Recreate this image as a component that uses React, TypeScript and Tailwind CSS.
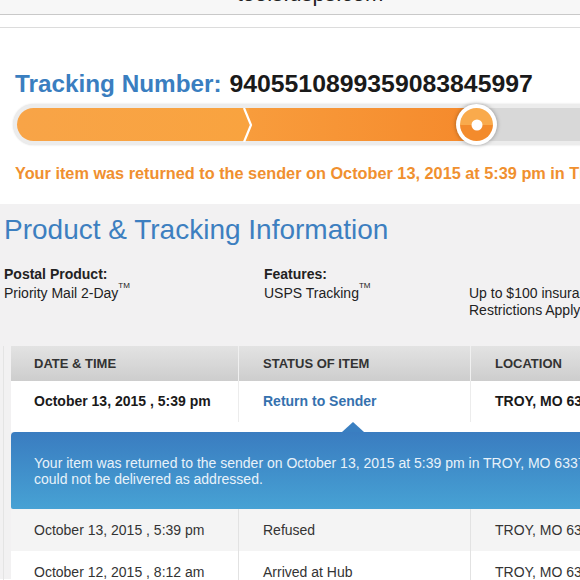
import React from "react";

const font = { fontFamily: '"Liberation Sans", Arial, sans-serif' };

function Row({ date, status, loc, bg }: { date: string; status: string; loc: string; bg: string }) {
  return (
    <div className={`flex h-[42px] items-center text-[14px] text-[#333] ${bg}`}>
      <div className="w-[228px] shrink-0 h-full flex items-center pl-[23px] border-r border-[#e2e2e2]">{date}</div>
      <div className="w-[232px] shrink-0 h-full flex items-center pl-[24px] border-r border-[#e2e2e2]">{status}</div>
      <div className="flex-1 h-full flex items-center pl-[24px] whitespace-nowrap">{loc}</div>
    </div>
  );
}

export default function App() {
  return (
    <div className="w-[580px] h-[580px] overflow-hidden bg-white" style={font}>
      {/* browser url bar */}
      <div className="h-[15px] bg-[#f7f7f7] border-b border-[#c9c9c9] overflow-hidden flex justify-center">
        <div className="text-[22px] leading-[22px] -mt-[17px] text-[#222] pl-[40px]">tools.usps.com</div>
      </div>
      <div className="h-[13px] bg-white border-b border-[#dcdcdc]" />

      {/* tracking header */}
      <div className="pt-[42px] pl-[15px] h-[176px] overflow-hidden whitespace-nowrap">
        <div className="text-[24.5px] leading-[28px] font-bold">
          <span className="text-[#3a7ec0] text-[24.3px]">Tracking Number:</span>{" "}
          <span className="text-[#1a1a1a] ml-[1px] text-[24.8px]">9405510899359083845997</span>
        </div>
        {/* progress bar */}
        <div className="relative mt-[6px] -ml-[2px] h-[41px] rounded-l-full bg-[#ececec] p-[4px] pr-0 w-[600px] shadow-[0_0_2px_rgba(0,0,0,0.15)]">
          <div className="flex h-full">
            <div className="w-[232px] shrink-0 h-full rounded-l-full bg-gradient-to-r from-[#f8a447] to-[#f9a33f]" />
            <div className="w-[232px] shrink-0 h-full bg-gradient-to-r from-[#f89c3c] to-[#f5892b]" />
            <div className="flex-1 h-full bg-[#d8d8d8]" />
          </div>
          <svg className="absolute left-[229px] top-[4px]" width="14" height="34" viewBox="0 0 14 34">
            <polyline points="2,0 9,17 2,34" fill="none" stroke="#fff" strokeWidth="2.2" />
          </svg>
          <div className="absolute left-[443px] top-[0px] w-[41px] h-[41px] rounded-full bg-white shadow-[0_0_4px_rgba(0,0,0,0.35)] flex items-center justify-center">
            <div className="w-[33px] h-[33px] rounded-full overflow-hidden flex flex-col relative">
              <div className="h-1/2 bg-[#f9aa4c]" />
              <div className="h-1/2 bg-[#f38b2c]" />
              <div className="absolute left-1/2 top-1/2 -translate-x-1/2 -translate-y-1/2 w-[11px] h-[11px] rounded-full bg-white" />
            </div>
          </div>
        </div>
        <div className="mt-[19px] text-[16.3px] leading-[19px] font-bold text-[#f0902f]">
          Your item was returned to the sender on October 13, 2015 at 5:39 pm in TROY, MO
        </div>
      </div>

      {/* product & tracking information */}
      <div className="bg-[#f2f1f2] pt-[10px] h-[375px]">
        <h2 className="pl-[4px] text-[28px] leading-[32px] text-[#3d7fc0] whitespace-nowrap">Product &amp; Tracking Information</h2>
        <div className="flex mt-[20px] text-[14px] text-[#222] whitespace-nowrap">
          <div className="w-[264px] shrink-0 pl-[4px]">
            <div className="font-bold leading-[16px]">Postal Product:</div>
            <div className="mt-[3px] text-[14px] leading-[17px]">Priority Mail 2-Day<sup className="text-[8px] align-super">TM</sup></div>
          </div>
          <div className="w-[205px] shrink-0">
            <div className="font-bold leading-[16px]">Features:</div>
            <div className="mt-[3px] text-[14px] leading-[17px]">USPS Tracking<sup className="text-[8px] align-super">TM</sup></div>
          </div>
          <div className="flex-1 pt-[19px] text-[14px] leading-[17px]">
            <div>Up to $100 insurance included.</div>
            <div>Restrictions Apply</div>
          </div>
        </div>

        {/* table */}
        <div className="mt-[27px] ml-[3px] pl-[7px] border-l border-[#e4e4e4] whitespace-nowrap">
          <div className="flex h-[35px] items-center text-[13px] font-bold text-[#333] bg-gradient-to-b from-[#e3e3e3] to-[#cdcdcd]">
            <div className="w-[228px] shrink-0 h-full flex items-center pl-[23px] border-r border-[#f0f0f0]">DATE &amp; TIME</div>
            <div className="w-[232px] shrink-0 h-full flex items-center pl-[24px] border-r border-[#f0f0f0]">STATUS OF ITEM</div>
            <div className="flex-1 h-full flex items-center pl-[24px]">LOCATION</div>
          </div>
          <div className="flex h-[41px] items-center text-[14px] font-bold text-[#1a1a1a] bg-white">
            <div className="w-[228px] shrink-0 h-full flex items-center pl-[23px] border-r border-[#ececec]">October 13, 2015 , 5:39 pm</div>
            <div className="w-[232px] shrink-0 h-full flex items-center pl-[24px] border-r border-[#ececec] text-[#3571ae]">Return to Sender</div>
            <div className="flex-1 h-full flex items-center pl-[24px]">TROY, MO 63379</div>
          </div>
          <div className="relative bg-white h-[10px]">
            <div className="absolute left-[331px] top-0 w-0 h-0 border-l-[11px] border-r-[11px] border-b-[10px] border-l-transparent border-r-transparent border-b-[#3a7fc1]" />
          </div>
          <div className="h-[77px] rounded-tl-[4px] rounded-bl-[2px] bg-gradient-to-b from-[#3a7cc0] to-[#47a2d4] pl-[23px] pt-[23px] text-[14px] leading-[16px] text-[#e8f2fa]">
            <div>Your item was returned to the sender on October 13, 2015 at 5:39 pm in TROY, MO 63379 because it</div>
            <div>could not be delivered as addressed.</div>
          </div>
          <Row date="October 13, 2015 , 5:39 pm" status="Refused" loc="TROY, MO 63379" bg="bg-[#f4f4f4]" />
          <Row date="October 12, 2015 , 8:12 am" status="Arrived at Hub" loc="TROY, MO 63379" bg="bg-white" />
        </div>
      </div>
    </div>
  );
}
